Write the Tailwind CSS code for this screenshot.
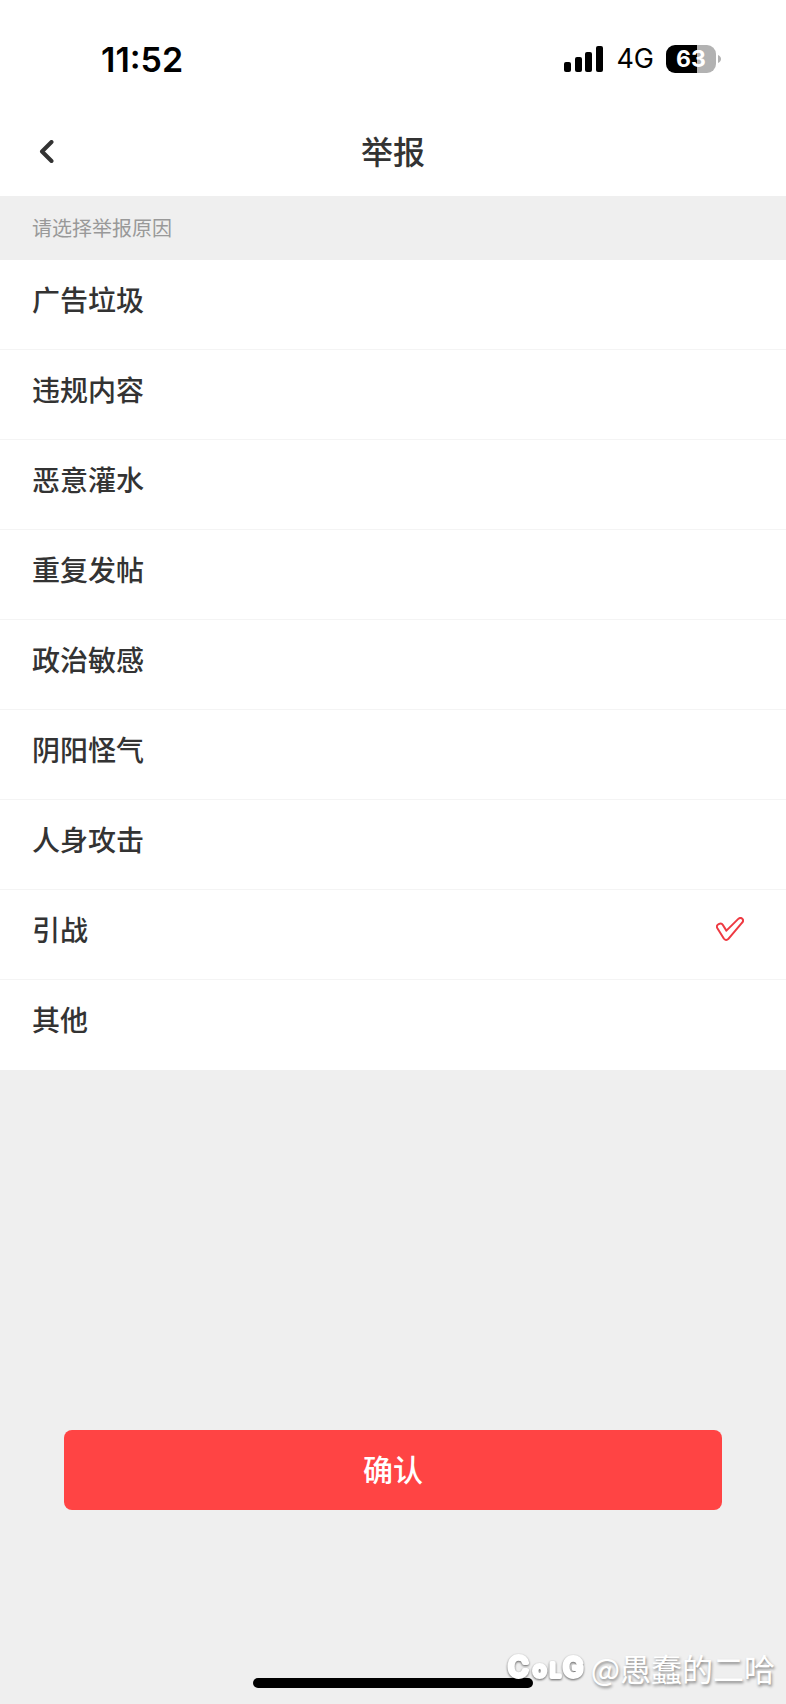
<!DOCTYPE html>
<html lang="zh-CN">

<head>
    <meta charset="UTF-8">
    <meta name="viewport" content="width=device-width, initial-scale=1.0">
    <script src="https://cdn.jsdelivr.net/npm/@tailwindcss/browser@4"></script>
    <title>举报</title>
</head>

<body class="relative flex min-h-screen flex-col bg-[#efefef] font-['Noto_Sans_CJK_SC',sans-serif] text-[#333333]">
    <header class="bg-white">
        <!--Status Bar-->
        <div class="flex h-[108px] items-center justify-between pt-[10px] pr-[65px] pl-[101px] font-['Inter',sans-serif] text-black">
            <span class="text-[34px] font-semibold">11:52</span>
            <div class="flex items-center">
                <svg class="mr-3 h-[26px] w-10" viewBox="0 0 40 26" fill="currentColor" aria-hidden="true">
                    <rect x="0" y="16" width="7" height="10" rx="2" />
                    <rect x="11" y="11" width="7" height="15" rx="2" />
                    <rect x="21" y="6" width="7" height="20" rx="2" />
                    <rect x="32" y="0" width="7" height="26" rx="2" />
                </svg>
                <span class="mr-3 text-[27px]">4G</span>
                <div class="flex h-7 w-[50px] items-center justify-center rounded-[9px] bg-linear-to-r from-black from-[62%] to-[#b2b2b2] to-[62%] text-[23px] font-bold text-white">63</div>
                <svg class="ml-[2px] h-2 w-[3px]" viewBox="0 0 3 8" fill="#b2b2b2" aria-hidden="true">
                    <path d="M0 0C4 1.5 4 6.5 0 8Z" />
                </svg>
            </div>
        </div>
        <!--Nav Bar-->
        <div class="grid h-[88px] grid-cols-[1fr_auto_1fr] items-center px-8">
            <button type="button" aria-label="返回" class="flex h-12 w-7 items-center justify-center">
                <svg class="h-6 w-4" viewBox="0 0 16 24" fill="none" stroke="currentColor" stroke-width="4" stroke-linecap="round" stroke-linejoin="round">
                    <path d="M13.5 2L4 11.5L13.5 21" />
                </svg>
            </button>
            <h1 class="pb-1 text-[32px] font-medium">举报</h1>
        </div>
    </header>

    <main>
        <form>
            <fieldset>
                <legend class="flex h-16 w-full items-center px-8 text-xl text-[#999999]">请选择举报原因</legend>
                <div class="divide-y divide-[#f4f4f4] bg-white text-[28px] font-medium">
                    <label class="flex h-[90px] items-center justify-between pr-[42px] pb-3 pl-8">
                        广告垃圾<input type="radio" name="reason" class="size-0 appearance-none">
                    </label>
                    <label class="flex h-[90px] items-center justify-between pr-[42px] pb-3 pl-8">
                        违规内容<input type="radio" name="reason" class="size-0 appearance-none">
                    </label>
                    <label class="flex h-[90px] items-center justify-between pr-[42px] pb-3 pl-8">
                        恶意灌水<input type="radio" name="reason" class="size-0 appearance-none">
                    </label>
                    <label class="flex h-[90px] items-center justify-between pr-[42px] pb-3 pl-8">
                        重复发帖<input type="radio" name="reason" class="size-0 appearance-none">
                    </label>
                    <label class="flex h-[90px] items-center justify-between pr-[42px] pb-3 pl-8">
                        政治敏感<input type="radio" name="reason" class="size-0 appearance-none">
                    </label>
                    <label class="flex h-[90px] items-center justify-between pr-[42px] pb-3 pl-8">
                        阴阳怪气<input type="radio" name="reason" class="size-0 appearance-none">
                    </label>
                    <label class="flex h-[90px] items-center justify-between pr-[42px] pb-3 pl-8">
                        人身攻击<input type="radio" name="reason" class="size-0 appearance-none">
                    </label>
                    <label class="flex h-[90px] items-center justify-between pr-[42px] pb-3 pl-8">
                        引战<input type="radio" name="reason" checked class="ml-auto size-0 appearance-none">
                        <svg class="h-6 w-7" viewBox="0 0 28 24" fill="none" stroke="#ee3a42" stroke-width="2" stroke-linejoin="round" aria-hidden="true">
                            <path d="M1.4 11.2C0.3 9.3 1 8 2.7 7.1C4.2 6.3 5.8 6.2 6.7 7.7L10.4 13.6L22.3 1.9C23.6 0.6 25.4 0.6 26.4 1.8C27.4 3 27.2 4.5 26.1 5.7L12.4 21.8C11 23.4 9 23.3 7.8 21.5Z" />
                        </svg>
                    </label>
                    <label class="flex h-[90px] items-center justify-between pr-[42px] pb-3 pl-8">
                        其他<input type="radio" name="reason" class="size-0 appearance-none">
                    </label>
                </div>
            </fieldset>
            <div class="mt-[360px] px-16">
                <button type="submit" class="h-20 w-full rounded-lg bg-[#ff4444] pb-1 text-[30px] font-medium text-white">确认</button>
            </div>
        </form>
    </main>

    <!--Home Indicator-->
    <div class="mx-auto mt-auto mb-4 h-[10px] w-[280px] rounded-full bg-black"></div>

    <!--Watermark-->
    <div class="absolute right-[11px] bottom-3 flex items-center gap-1 text-[31px] leading-[48px] text-white">
        <svg class="h-9 w-20 drop-shadow-[0_1px_1px_rgba(0,0,0,0.6)]" viewBox="0 0 80 36" fill="white" stroke="white" stroke-width="4" stroke-linejoin="round" font-family="Inter, sans-serif" font-weight="500" role="img" aria-label="COLG">
            <text y="27"><tspan x="1" font-size="28">C</tspan><tspan x="26" font-size="22">o</tspan><tspan x="43" font-size="19">L</tspan><tspan x="56" font-size="27">G</tspan></text>
        </svg>
        <span class="text-shadow-[1px_2px_3px_rgba(0,0,0,0.45)]">@愚蠢的二哈</span>
    </div>
</body>

</html>
